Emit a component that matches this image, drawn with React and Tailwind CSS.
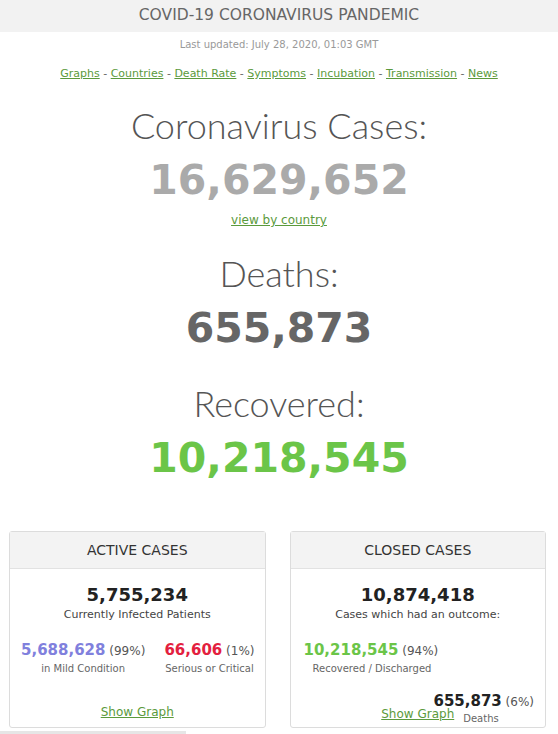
const verdana = 'font-["Verdana","DejaVu_Sans",sans-serif]'

function Link({ children }) {
  return <a href="#" className="text-[#5b9a3c] underline">{children}</a>
}

function Counter({ label, value, color, children }) {
  return (
    <div className="flex flex-col items-center">
      <h1 className="mb-[3px] font-['Lato',sans-serif] font-light text-[36px] leading-[44px] text-[#555]">{label}</h1>
      <div className={`${verdana} font-bold text-[41px] leading-[60px] ${color}`}>{value}</div>
      {children}
    </div>
  )
}

function Card({ title, children }) {
  return (
    <div className="flex-1 flex flex-col border border-[#dcdcdc] rounded-[3px] bg-white h-[197px]">
      <div className="h-[37px] flex items-center justify-center bg-[#f3f3f3] border-b border-[#e2e2e2] text-[14px] text-[#333]">
        {title}
      </div>
      {children}
    </div>
  )
}

export default function App() {
  const links = ['Graphs', 'Countries', 'Death Rate', 'Symptoms', 'Incubation', 'Transmission', 'News']

  return (
    <div className={`${verdana} w-[558px] h-[734px] bg-white overflow-hidden flex flex-col`}>
      <div className="h-[32px] bg-[#f2f2f2] flex items-center justify-center text-[15.5px] text-[#666]">
        COVID-19 CORONAVIRUS PANDEMIC
      </div>
      <div className="mt-[5px] text-center text-[10px] leading-[15px] text-[#999]">Last updated: July 28, 2020, 01:03 GMT</div>

      <div className="mt-[14px] text-center text-[11px] leading-[16px] text-[#666]">
        {links.map((l, i) => (
          <span key={l}>
            {i > 0 && ' - '}
            <Link>{l}</Link>
          </span>
        ))}
      </div>

      <div className="mt-[21px]">
        <Counter label="Coronavirus Cases:" value="16,629,652" color="text-[#aaa]">
          <div className="mt-[2px] text-[12px] leading-[16px]"><Link>view by country</Link></div>
        </Counter>
      </div>
      <div className="mt-[23px]">
        <Counter label="Deaths:" value="655,873" color="text-[#666]" />
      </div>
      <div className="mt-[23px]">
        <Counter label="Recovered:" value="10,218,545" color="text-[#6bc548]" />
      </div>

      <div className="mt-[43px] pl-[9px] pr-[12px] flex gap-[24px]">
        <Card title="ACTIVE CASES">
          <div className="flex flex-col items-center pt-[14px] flex-1">
            <div className="font-bold text-[18px] leading-[24px] text-[#222]">5,755,234</div>
            <div className="text-[11px] text-[#444]">Currently Infected Patients</div>
            <div className="mt-[16px] w-full flex justify-between pl-[11px] pr-[10px]">
              <div className="flex flex-col items-center">
                <div className="leading-[20px]">
                  <span className="font-bold text-[15px] text-[#8080dd]">5,688,628</span>
                  <span className="text-[12px] text-[#555]"> (99%)</span>
                </div>
                <div className="text-[10px] text-[#666]">in Mild Condition</div>
              </div>
              <div className="flex flex-col items-center">
                <div className="leading-[20px]">
                  <span className="font-bold text-[15px] text-[#e3203e]">66,606</span>
                  <span className="text-[12px] text-[#555]"> (1%)</span>
                </div>
                <div className="text-[10px] text-[#666]">Serious or Critical</div>
              </div>
            </div>
            <div className="mt-auto mb-[6px] text-[12px]"><Link>Show Graph</Link></div>
          </div>
        </Card>

        <Card title="CLOSED CASES">
          <div className="flex flex-col pt-[14px] flex-1">
            <div className="text-center font-bold text-[18px] leading-[24px] text-[#222]">10,874,418</div>
            <div className="text-center text-[11px] text-[#444]">Cases which had an outcome:</div>
            <div className="mt-[16px] pl-[13px] flex flex-col items-start">
              <div className="leading-[20px]">
                <span className="font-bold text-[15px] text-[#6bc548]">10,218,545</span>
                <span className="text-[12px] text-[#555]"> (94%)</span>
              </div>
              <div className="pl-[9px] text-[10px] text-[#666]">Recovered / Discharged</div>
            </div>
            <div className="mt-auto mb-[1px]">
              <div className="pr-[11px] text-right leading-[18px]">
                <span className="font-bold text-[15px] text-[#222]">655,873</span>
                <span className="text-[12px] text-[#555]"> (6%)</span>
              </div>
              <div className="-mt-[5px] grid grid-cols-[1fr_auto_1fr] items-start">
                <div />
                <div className="text-[12px] leading-[16px]"><Link>Show Graph</Link></div>
                <div className="pl-[9px] pt-[6px] text-[10px] leading-[14px] text-[#666]">Deaths</div>
              </div>
            </div>
          </div>
        </Card>
      </div>
      <div className="mt-auto h-[3px] w-[186px] bg-[#e6e6e6]" />
    </div>
  )
}
